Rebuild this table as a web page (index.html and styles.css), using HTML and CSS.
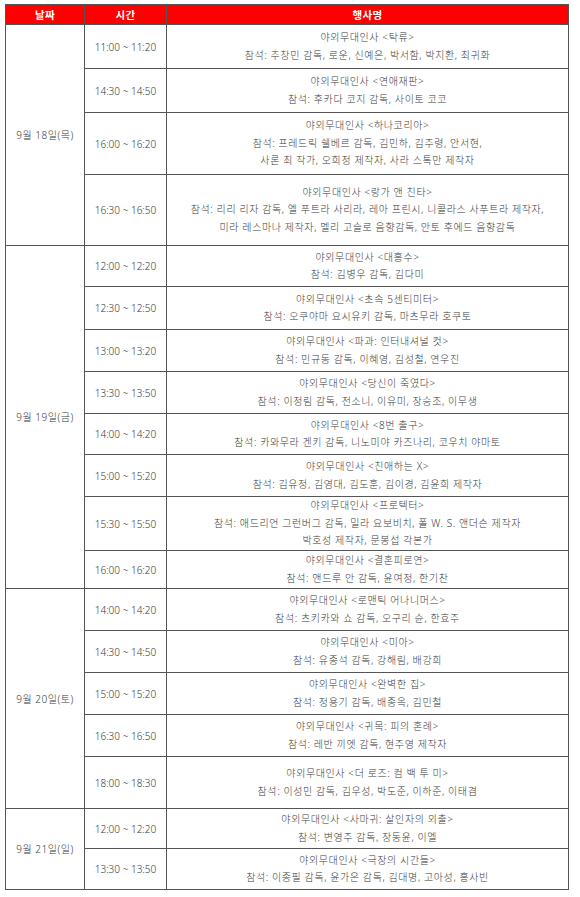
FILE: index.html
```html
<!DOCTYPE html>
<html lang="ko">
<head>
<meta charset="utf-8">
<title>야외무대인사 일정</title>
<link rel="stylesheet" href="styles.css">
</head>
<body>
<table class="schedule">
  <colgroup>
    <col class="c-date">
    <col class="c-time">
    <col class="c-event">
  </colgroup>
  <thead>
    <tr class="head">
      <th>날짜</th>
      <th>시간</th>
      <th>행사명</th>
    </tr>
  </thead>
  <tbody>
    <tr class="r44">
      <td class="date" rowspan="4">9월 18일(목)</td>
      <td class="time">11:00 ~ 11:20</td>
      <td class="event">야외무대인사 &lt;탁류&gt;<br>참석: 추창민 감독, 로운, 신예은, 박서함, 박지환, 최귀화</td>
    </tr>
    <tr class="r44">
      <td class="time">14:30 ~ 14:50</td>
      <td class="event">야외무대인사 &lt;연애재판&gt;<br>참석: 후카다 코지 감독, 사이토 코코</td>
    </tr>
    <tr class="r62">
      <td class="time">16:00 ~ 16:20</td>
      <td class="event">야외무대인사 &lt;하나코리아&gt;<br>참석: 프레드릭 쉘베르 감독, 김민하, 김주령, 안서현,<br>사론 최 작가, 오희정 제작자, 사라 스톡만 제작자</td>
    </tr>
    <tr class="r71">
      <td class="time">16:30 ~ 16:50</td>
      <td class="event">야외무대인사 &lt;랑가 앤 친타&gt;<br>참석: 리리 리자 감독, 엘 푸트라 사리라, 레아 프린시, 니콜라스 사푸트라 제작자,<br>미라 레스마나 제작자, 멜리 고슬로 음향감독, 안토 후에드 음향감독</td>
    </tr>

    <tr class="r41">
      <td class="date" rowspan="8">9월 19일(금)</td>
      <td class="time">12:00 ~ 12:20</td>
      <td class="event">야외무대인사 &lt;대홍수&gt;<br>참석: 김병우 감독, 김다미</td>
    </tr>
    <tr class="r43">
      <td class="time">12:30 ~ 12:50</td>
      <td class="event">야외무대인사 &lt;초속 5센티미터&gt;<br>참석: 오쿠야마 요시유키 감독, 마츠무라 호쿠토</td>
    </tr>
    <tr class="r42">
      <td class="time">13:00 ~ 13:20</td>
      <td class="event">야외무대인사 &lt;파과: 인터내셔널 컷&gt;<br>참석: 민규동 감독, 이혜영, 김성철, 연우진</td>
    </tr>
    <tr class="r42">
      <td class="time">13:30 ~ 13:50</td>
      <td class="event">야외무대인사 &lt;당신이 죽였다&gt;<br>참석: 이정림 감독, 전소니, 이유미, 장승조, 이무생</td>
    </tr>
    <tr class="r41">
      <td class="time">14:00 ~ 14:20</td>
      <td class="event">야외무대인사 &lt;8번 출구&gt;<br>참석: 카와무라 겐키 감독, 니노미야 카즈나리, 코우치 야마토</td>
    </tr>
    <tr class="r42">
      <td class="time">15:00 ~ 15:20</td>
      <td class="event">야외무대인사 &lt;친애하는 X&gt;<br>참석: 김유정, 김영대, 김도훈, 김이경, 김윤희 제작자</td>
    </tr>
    <tr class="r54">
      <td class="time">15:30 ~ 15:50</td>
      <td class="event">야외무대인사 &lt;프로텍터&gt;<br>참석: 애드리언 그런버그 감독, 밀라 요보비치, 폴 W. S. 앤더슨 제작자<br>박호성 제작자, 문봉섭 각본가</td>
    </tr>
    <tr class="r38">
      <td class="time">16:00 ~ 16:20</td>
      <td class="event">야외무대인사 &lt;결혼피로연&gt;<br>참석: 앤드루 안 감독, 윤여정, 한기찬</td>
    </tr>

    <tr class="r42">
      <td class="date" rowspan="5">9월 20일(토)</td>
      <td class="time">14:00 ~ 14:20</td>
      <td class="event">야외무대인사 &lt;로맨틱 어나니머스&gt;<br>참석: 츠키카와 쇼 감독, 오구리 슌, 한효주</td>
    </tr>
    <tr class="r42">
      <td class="time">14:30 ~ 14:50</td>
      <td class="event">야외무대인사 &lt;미아&gt;<br>참석: 유종석 감독, 강해림, 배강희</td>
    </tr>
    <tr class="r42">
      <td class="time">15:00 ~ 15:20</td>
      <td class="event">야외무대인사 &lt;완벽한 집&gt;<br>참석: 정용기 감독, 배종옥, 김민철</td>
    </tr>
    <tr class="r42">
      <td class="time">16:30 ~ 16:50</td>
      <td class="event">야외무대인사 &lt;귀목: 피의 혼례&gt;<br>참석: 레반 끼엣 감독, 현주영 제작자</td>
    </tr>
    <tr class="r52">
      <td class="time">18:00 ~ 18:30</td>
      <td class="event">야외무대인사 &lt;더 로즈: 컴 백 투 미&gt;<br>참석: 이성민 감독, 김우성, 박도준, 이하준, 이태겸</td>
    </tr>

    <tr class="r40">
      <td class="date" rowspan="2">9월 21일(일)</td>
      <td class="time">12:00 ~ 12:20</td>
      <td class="event">야외무대인사 &lt;사마귀: 살인자의 외출&gt;<br>참석: 변영주 감독, 장동윤, 이엘</td>
    </tr>
    <tr class="r41">
      <td class="time">13:30 ~ 13:50</td>
      <td class="event">야외무대인사 &lt;극장의 시간들&gt;<br>참석: 이종필 감독, 윤가은 감독, 김대명, 고아성, 홍사빈</td>
    </tr>
  </tbody>
</table>
</body>
</html>
```
FILE: styles.css
```css
html, body {
  background: #ffffff;
}

body {
  margin: 4px 0 0 5px;
  font-family: "Noto Sans", "Noto Sans CJK KR", sans-serif;
  font-size: 10px;
  font-weight: 300;
  color: #3a3a3a;
}

.schedule {
  border-collapse: collapse;
  table-layout: fixed;
  width: 563px;
}

.c-date { width: 79px; }
.c-time { width: 82px; }
.c-event { width: 402px; }

.schedule th,
.schedule td {
  border: 1px solid #555555;
  padding: 0 2px;
  text-align: center;
  vertical-align: middle;
}

.head {
  height: 20px;
}

.head th {
  background: #ff0000;
  color: #ffffff;
  font-weight: bold;
  font-size: 10.5px;
  line-height: 14px;
  letter-spacing: 0.4px;
}

.event {
  line-height: 17.5px;
  letter-spacing: 0.6px;
  padding-top: 3px;
}

.time,
.date {
  line-height: 14px;
}

.date {
  letter-spacing: 0.5px;
  padding-top: 3px;
}

.r38 { height: 38px; }
.r40 { height: 40px; }
.r41 { height: 41px; }
.r42 { height: 42px; }
.r43 { height: 43px; }
.r44 { height: 44px; }
.r52 { height: 52px; }
.r54 { height: 54px; }
.r62 { height: 62px; }
.r71 { height: 71px; }
```
